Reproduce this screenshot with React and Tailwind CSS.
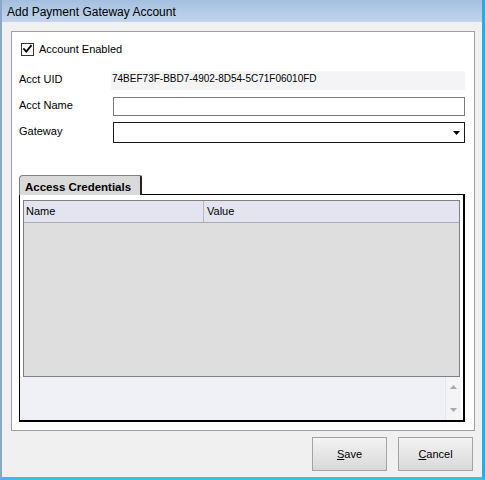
import React from "react";

function Check() {
  return (
    <div className="w-[13px] h-[13px] border border-[#333] bg-white flex items-center justify-center">
      <svg width="11" height="11" viewBox="0 0 11 11">
        <path d="M2 5 L4.3 7.6 L9 1.8" fill="none" stroke="#000" strokeWidth="1.8" strokeLinecap="square" />
      </svg>
    </div>
  );
}

export default function App() {
  const font = { fontFamily: '"Liberation Sans", Arial, sans-serif' };
  return (
    <div
      className="w-[485px] h-[480px] flex flex-col border-l-2 border-l-[#8ba7c6] border-r-[3px] border-r-[#2fa9e0] border-b-[3px] border-b-[#3bbde8] bg-[#f0f0f0] text-black"
      style={font}
    >
      <div className="h-[22px] shrink-0 flex items-center pl-[5px] pt-[2px] bg-gradient-to-b from-[#a4bfdf] to-[#c2d6ec] text-[12px] leading-[14px]">
        Add Payment Gateway Account
      </div>
      <div className="flex-1 flex flex-col pt-[9px] pl-[9px]">
        <div className="w-[464px] h-[400px] border border-[#a0a0a0] bg-white pl-[7px] flex flex-col text-[11px] leading-[13px]">
          <div className="mt-[11px] flex items-start">
            <div className="ml-[2px]">
              <Check />
            </div>
            <span className="ml-[5px]">Account Enabled</span>
          </div>

          <div className="mt-[15px] flex items-start w-[446px]">
            <div className="w-[92px] pt-[2px]">Acct UID</div>
            <div className="w-[354px] h-[19px] bg-[#f4f4f7] pl-[1px] pt-[2px] text-[10px] leading-[12px]">
              74BEF73F-BBD7-4902-8D54-5C71F06010FD
            </div>
          </div>

          <div className="mt-[7px] flex items-start w-[446px]">
            <div className="w-[94px] pt-[2px]">Acct Name</div>
            <div className="w-[352px] h-[19px] border border-[#7a7a7a] bg-white" />
          </div>

          <div className="mt-[6px] flex items-start w-[446px]">
            <div className="w-[94px] pt-[3px]">Gateway</div>
            <div className="w-[352px] h-[21px] border border-[#1a1a1a] bg-white flex items-center justify-end pr-[4px]">
              <svg width="7" height="4" viewBox="0 0 7 4">
                <path d="M0 0 H7 L3.5 4 Z" fill="#000" />
              </svg>
            </div>
          </div>

          <div className="mt-[32px] w-[446px] flex flex-col">
            <div className="flex">
              <div className="w-[123px] h-[20px] bg-[#dadada] border-l border-t border-r-2 border-l-[#808080] border-t-[#808080] border-r-[#222] rounded-tl-[4px] rounded-tr-[2px] pl-[5px] pt-[5px] font-bold text-[11.5px] leading-[13px]">
                Access Credentials
              </div>
              <div className="flex-1 border-b border-[#000]" />
            </div>
            <div className="h-[227px] border-l border-[#000] border-r-2 border-b-2 bg-white flex flex-col">
              <div className="ml-[3px] mr-[3px] mt-[5px] h-[177px] border border-[#808080] bg-[#dedede] flex flex-col">
                <div className="h-[22px] bg-[#e4e4f0] border-b border-[#a8a8b4] flex">
                  <div className="w-[180px] border-r border-[#b8b8c4] pl-[2px] pt-[4px]">Name</div>
                  <div className="flex-1 pl-[3px] pt-[4px]">Value</div>
                </div>
              </div>
              <div className="flex-1 bg-[#f0f0f7] flex mr-[2px]">
                <div className="flex-1" />
                <div className="w-[16px] bg-[#f4f4f7] border-l border-[#e4e4ea] flex flex-col items-center justify-between py-[8px]">
                  <svg width="7" height="4" viewBox="0 0 7 4">
                    <path d="M0 4 H7 L3.5 0 Z" fill="#a8a8a8" />
                  </svg>
                  <svg width="7" height="4" viewBox="0 0 7 4">
                    <path d="M0 0 H7 L3.5 4 Z" fill="#a8a8a8" />
                  </svg>
                </div>
              </div>
            </div>
          </div>
        </div>

        <div className="mt-[6px] flex justify-end gap-[11px] pr-[9px] text-[11px]">
          <button className="w-[75px] h-[34px] border border-[#a3a3a3] bg-gradient-to-b from-[#f3f3f3] to-[#d9d9d9] flex items-center justify-center">
            <span><span className="underline">S</span>ave</span>
          </button>
          <button className="w-[75px] h-[34px] border border-[#a3a3a3] bg-gradient-to-b from-[#f3f3f3] to-[#d9d9d9] flex items-center justify-center">
            <span><span className="underline">C</span>ancel</span>
          </button>
        </div>
      </div>
    </div>
  );
}
